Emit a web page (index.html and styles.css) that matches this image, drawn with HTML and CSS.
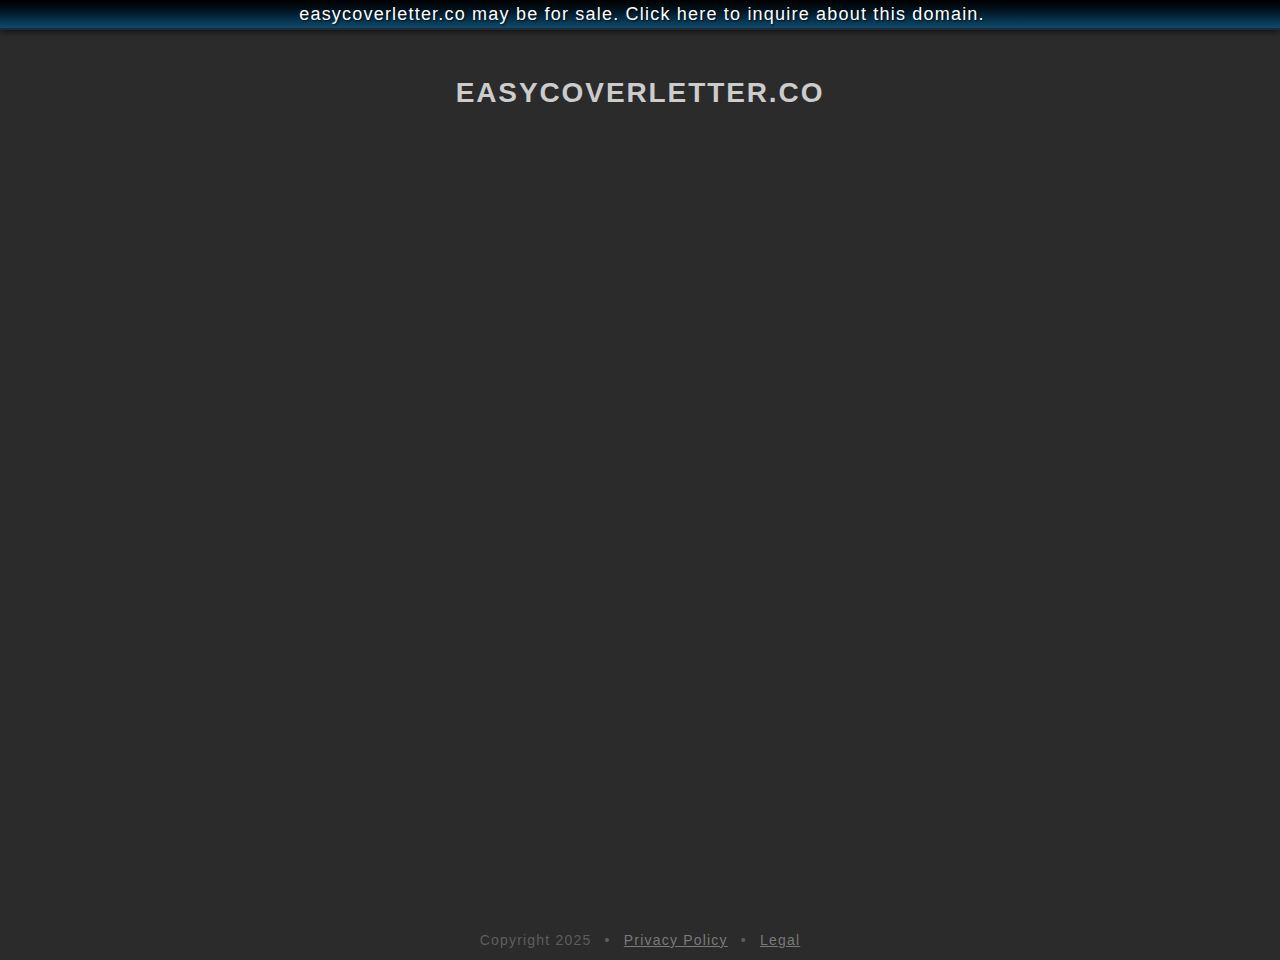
FILE: index.html
```html
<!DOCTYPE html>
<html>
<head>
<meta charset="utf-8">
<link rel="stylesheet" href="styles.css">
</head>
<body>
<div class="page">
  <a class="sale-bar" href="#">easycoverletter.co may be for sale. Click here to inquire about this domain.</a>
  <h1 class="title">EASYCOVERLETTER.CO</h1>
  <div class="spacer"></div>
  <div class="footer">
    <span class="copy">Copyright 2025</span>
    <span class="dot">•</span>
    <a href="#" class="flink">Privacy Policy</a>
    <span class="dot">•</span>
    <a href="#" class="flink">Legal</a>
  </div>
</div>
</body>
</html>
```
FILE: styles.css
```css
html, body {
  margin: 0;
  padding: 0;
  height: 100%;
  background: #2b2b2b;
  font-family: "Liberation Sans", Arial, sans-serif;
}
.page {
  display: flex;
  flex-direction: column;
  min-height: 960px;
}
.sale-bar {
  display: block;
  height: 28px;
  line-height: 28px;
  padding-left: 4px;
  text-align: center;
  color: #ffffff;
  font-size: 18px;
  letter-spacing: 1.2px;
  text-decoration: none;
  background: linear-gradient(to bottom, #000000 0%, #02121c 35%, #0a3a58 80%, #0d4a6c 100%);
  box-shadow: 0 2px 6px rgba(0,0,0,0.6);
  text-shadow: 1px 1px 2px rgba(0,0,0,0.8);
  border-bottom: 2px solid #1f2a33;
}
.title {
  margin: 46px 0 0 0;
  text-align: center;
  font-size: 28px;
  font-weight: bold;
  letter-spacing: 1.9px;
  color: #cccccc;
  line-height: 34px;
}
.spacer {
  flex: 1;
}
.footer {
  text-align: center;
  font-size: 14px;
  letter-spacing: 1.2px;
  color: #5e5e5e;
  padding-bottom: 12px;
  line-height: 16px;
}
.dot {
  margin: 0 8px;
}
.flink {
  color: #7a7a7a;
  text-decoration: underline;
}
```
